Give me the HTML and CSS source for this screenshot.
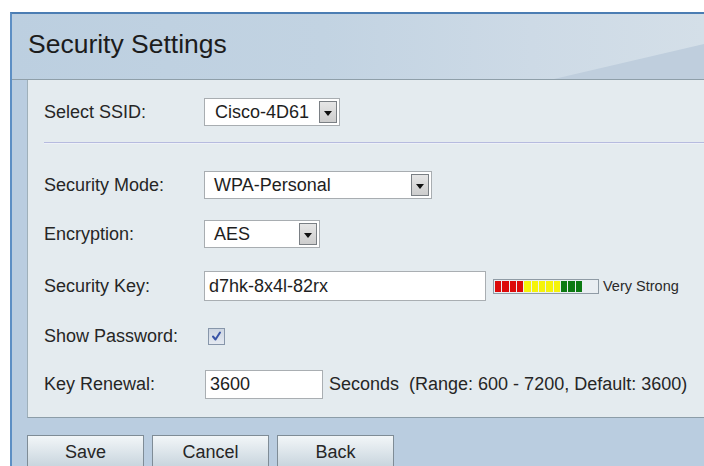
FILE: index.html
```html
<!DOCTYPE html>
<html lang="en">
<head>
<meta charset="utf-8">
<title>Security Settings</title>
<link rel="stylesheet" href="styles.css">
</head>
<body>
<div class="frame">
  <div class="header">
    <h1 class="title">Security Settings</h1>
  </div>

  <div class="panel">
    <div class="row row-first">
      <span class="label">Select SSID:</span>
      <div class="select select-ssid"><span class="select-text">Cisco-4D61</span><span class="arrow"></span></div>
    </div>

    <div class="divider"></div>

    <div class="row row-mode">
      <span class="label">Security Mode:</span>
      <div class="select select-mode"><span class="select-text">WPA-Personal</span><span class="arrow"></span></div>
    </div>

    <div class="row row-enc">
      <span class="label">Encryption:</span>
      <div class="select select-enc"><span class="select-text">AES</span><span class="arrow"></span></div>
    </div>

    <div class="row row-key">
      <span class="label">Security Key:</span>
      <div class="field field-key">d7hk-8x4l-82rx</div>
      <div class="meter">
        <span class="seg red"></span><span class="seg red"></span><span class="seg red"></span><span class="seg red"></span>
        <span class="seg yellow"></span><span class="seg yellow"></span><span class="seg yellow"></span><span class="seg yellow"></span><span class="seg yellow"></span>
        <span class="seg green"></span><span class="seg green"></span><span class="seg green"></span>
      </div>
      <span class="strength">Very Strong</span>
    </div>

    <div class="row row-show">
      <span class="label">Show Password:</span>
      <span class="checkbox">
        <svg width="11" height="11" viewBox="0 0 11 11"><path d="M2 5.5 L4.5 8.5 L9 1.5" fill="none" stroke="#3853a6" stroke-width="2" stroke-linecap="round" stroke-linejoin="round"/></svg>
      </span>
    </div>

    <div class="row row-renew">
      <span class="label">Key Renewal:</span>
      <div class="field field-renew">3600</div>
      <span class="hint">Seconds&nbsp;&nbsp;(Range: 600 - 7200, Default: 3600)</span>
    </div>
  </div>

  <div class="actions">
    <button class="btn">Save</button>
    <button class="btn">Cancel</button>
    <button class="btn">Back</button>
  </div>
</div>
</body>
</html>
```

FILE: styles.css
```css
html, body {
  margin: 0;
  padding: 0;
  background: #ffffff;
  overflow: hidden;
}

body {
  font-family: "Liberation Sans", Arial, sans-serif;
  color: #2a2a2a;
}

.frame {
  margin: 12px 0 0 10px;
  height: 454px;
  border-top: 2px solid #4b7db3;
  border-left: 2px solid #5d8fc4;
  background: #bacde0;
  box-sizing: border-box;
}

/* title bar with the soft sheen on the right */
.header {
  position: relative;
  height: 65px;
  padding-left: 16px;
  display: flex;
  align-items: center;
  background: linear-gradient(to right, #bccfe0 0%, #c2d3e2 45%, #cddae6 75%, #d4dfe8 100%);
  border-bottom: 1px solid #8f9fa9;
  overflow: hidden;
}

.header::after {
  content: "";
  position: absolute;
  right: 0;
  bottom: 0;
  width: 150px;
  height: 35px;
  background: #bfcedd;
  clip-path: polygon(100% 0, 100% 100%, 0 100%);
}

.title {
  margin: -5px 0 0 0;
  font-size: 26.5px;
  font-weight: normal;
  color: #1c1c1c;
}

.panel {
  margin-left: 15px;
  height: 338px;
  box-sizing: border-box;
  background: #e4ebef;
  border-left: 1px solid #9fb0ba;
  border-bottom: 1px solid #8c9da8;
  padding: 18px 0 0 16px;
}

.row {
  display: flex;
  align-items: center;
  height: 50px;
  font-size: 18px;
}

.row-first { height: 28px; }
.row-mode { height: 50px; }
.row-enc { height: 48px; }
.row-key { height: 56px; }
.row-show { height: 44px; }
.row-renew { height: 52px; }

.label {
  width: 160px;
  flex: none;
  color: #262626;
}

.divider {
  height: 1px;
  margin: 16px 0 17px 0;
  background: #b6bbdf;
  box-shadow: 0 1px 0 #eef1f8;
}

/* drop-down boxes */
.select {
  box-sizing: border-box;
  height: 28px;
  background: #ffffff;
  border: 1px solid #a8adb1;
  display: flex;
  align-items: center;
  justify-content: space-between;
  padding: 2px 2px 2px 9px;
  color: #1e1e1e;
}

.select-ssid { width: 136px; padding-left: 10px; }
.select-mode { width: 228px; }
.select-enc { width: 116px; }

.arrow {
  position: relative;
  align-self: stretch;
  width: 18px;
  box-sizing: border-box;
  border: 1px solid #7a7f84;
  background: linear-gradient(#e6e6e6, #cdcdcd);
}

.arrow::after {
  content: "";
  position: absolute;
  left: 4px;
  top: 9px;
  border-left: 4px solid transparent;
  border-right: 4px solid transparent;
  border-top: 5px solid #111;
}

/* text fields */
.field {
  box-sizing: border-box;
  background: #ffffff;
  border: 1px solid #a9aeb2;
  display: flex;
  align-items: center;
  padding-left: 4px;
  color: #1e1e1e;
}

.field-key {
  width: 282px;
  height: 30px;
}

.field-renew {
  width: 118px;
  height: 29px;
  margin-left: 1px;
}

/* password strength bar */
.meter {
  box-sizing: border-box;
  width: 106px;
  height: 15px;
  margin-left: 7px;
  border: 1px solid #8f9ba5;
  background: #e9eef2;
  display: flex;
  gap: 1px;
  padding: 1px;
}

.seg {
  width: 6.35px;
  height: 100%;
}

.red { background: #dc0a0a; }
.yellow { background: #f5f30a; }
.green { background: #0c7a12; }

.strength {
  margin-left: 4px;
  font-size: 14.5px;
  color: #2a2a2a;
}

.checkbox {
  box-sizing: border-box;
  width: 17px;
  height: 17px;
  margin-left: 4px;
  border: 1px solid #8796aa;
  background: linear-gradient(#ccd5e2, #e4e9f1);
  display: flex;
  align-items: center;
  justify-content: center;
}

.hint {
  margin-left: 6px;
  color: #262626;
}

/* button strip */
.actions {
  display: flex;
  gap: 8px;
  padding: 17px 0 0 15px;
}

.btn {
  width: 117px;
  height: 34px;
  font-family: "Liberation Sans", Arial, sans-serif;
  font-size: 18px;
  color: #262626;
  border: 1px solid #7f8c96;
  background: linear-gradient(#f2f6f8, #dae3e9 55%, #c6d3dc);
  padding: 0 0 0 0;
}
```
